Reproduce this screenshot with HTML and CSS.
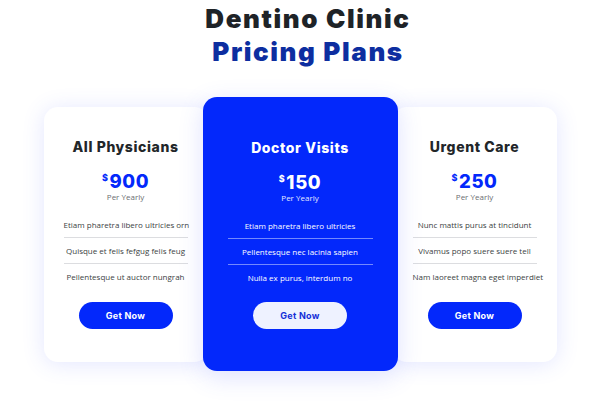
FILE: index.html
```html
<!DOCTYPE html>
<html lang="en">
<head>
<meta charset="utf-8">
<title>Dentino Clinic Pricing Plans</title>
<link rel="stylesheet" href="styles.css">
</head>
<body>
<main class="page">
  <h1 class="heading">
    <span class="heading-top">Dentino Clinic</span>
    <span class="heading-bottom">Pricing Plans</span>
  </h1>
  <section class="plans">
    <article class="plan">
      <h2 class="plan-title">All Physicians</h2>
      <div class="price"><span class="currency">$</span>900</div>
      <div class="period">Per Yearly</div>
      <ul class="features">
        <li>Etiam pharetra libero ultricies orn</li>
        <li>Quisque et felis fefgug felis feug</li>
        <li>Pellentesque ut auctor nungrah</li>
      </ul>
      <button class="btn" type="button">Get Now</button>
    </article>
    <article class="plan plan-featured">
      <h2 class="plan-title">Doctor Visits</h2>
      <div class="price"><span class="currency">$</span>150</div>
      <div class="period">Per Yearly</div>
      <ul class="features">
        <li>Etiam pharetra libero ultricies</li>
        <li>Pellentesque nec lacinia sapien</li>
        <li>Nulla ex purus, interdum no</li>
      </ul>
      <button class="btn" type="button">Get Now</button>
    </article>
    <article class="plan">
      <h2 class="plan-title">Urgent Care</h2>
      <div class="price"><span class="currency">$</span>250</div>
      <div class="period">Per Yearly</div>
      <ul class="features">
        <li>Nunc mattis purus at tincidunt</li>
        <li>Vivamus popo suere suere tell</li>
        <li>Nam laoreet magna eget imperdiet</li>
      </ul>
      <button class="btn" type="button">Get Now</button>
    </article>
  </section>
</main>
</body>
</html>
```
FILE: styles.css
```css
* { box-sizing: border-box; }

html, body {
  margin: 0;
  padding: 0;
  background: #ffffff;
}

body {
  font-family: "Open Sans", "Noto Sans", sans-serif;
  width: 600px;
  height: 401px;
  overflow: hidden;
}

.page {
  display: flex;
  flex-direction: column;
  align-items: center;
}

.heading {
  margin: 0;
  padding: 2px 0 0 16px;
  font-family: Inter, "DejaVu Sans", sans-serif;
  font-weight: 900;
  font-size: 26px;
  line-height: 33px;
  letter-spacing: 1.6px;
  text-align: center;
}

.heading-top,
.heading-bottom {
  display: block;
}

.heading-top { color: #1e2327; }
.heading-bottom { color: #0d2ea0; }

.plans {
  margin-top: 29px;
  display: flex;
  align-items: center;
  justify-content: center;
}

.plan {
  width: 164px;
  padding: 31px 20px 33px;
  background: #ffffff;
  border-radius: 14px;
  box-shadow: 0 2px 22px rgba(70, 90, 255, 0.15);
  display: flex;
  flex-direction: column;
  align-items: center;
  text-align: center;
  color: #222629;
}

.plan-featured {
  width: 195px;
  padding: 41.6px 25px 42px;
  margin: 0 -5px;
  position: relative;
  z-index: 1;
  background: #0328fb;
  color: #ffffff;
  box-shadow: 0 6px 24px rgba(70, 90, 255, 0.18);
}

.plan-title {
  margin: 0;
  font-family: Inter, "DejaVu Sans", sans-serif;
  font-weight: 800;
  font-size: 14px;
  line-height: 17px;
  letter-spacing: 0.6px;
}

.price {
  margin-top: 15.3px;
  font-family: Inter, "DejaVu Sans", sans-serif;
  font-weight: 800;
  font-size: 18.5px;
  line-height: 22px;
  letter-spacing: 0.6px;
  color: #0328fb;
}

.plan-featured .price { color: #ffffff; }

.currency {
  font-size: 9px;
  line-height: 9px;
  vertical-align: top;
  margin-right: 1px;
  position: relative;
  top: 3px;
}

.period {
  font-size: 8px;
  line-height: 10px;
  color: #6b6e72;
}

.plan-featured .period { color: #e4e8ff; }

.features {
  list-style: none;
  margin: 10.3px 0 0;
  padding: 0;
  width: 100%;
}

.features li {
  font-size: 8px;
  line-height: 11px;
  padding: 7px 0;
  border-bottom: 1px solid #dcdde0;
  color: #3c3f43;
  white-space: nowrap;
}

.features li:last-child {
  border-bottom: none;
}

.plan-featured .features li {
  color: #ffffff;
  border-bottom-color: rgba(255, 255, 255, 0.45);
}

.plan-featured .features li:last-child { border-bottom: none; }

.btn {
  margin-top: 12.3px;
  width: 94px;
  height: 27px;
  border: none;
  border-radius: 14px;
  background: #0328fb;
  color: #ffffff;
  font-family: Inter, "DejaVu Sans", sans-serif;
  font-weight: 700;
  font-size: 9px;
  letter-spacing: 0.3px;
  cursor: pointer;
}

.plan-featured .btn {
  background: #eef2ff;
  color: #1530d8;
}
```
